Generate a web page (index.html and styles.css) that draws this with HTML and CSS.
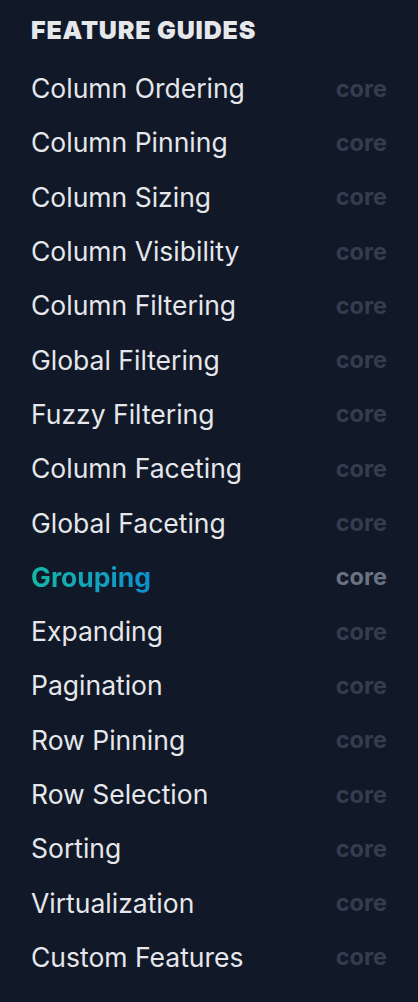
FILE: index.html
```html
<!DOCTYPE html>
<html>
<head>
<meta charset="utf-8">
<link rel="stylesheet" href="styles.css">
</head>
<body>
<nav class="sidebar">
  <h2 class="heading">Feature Guides</h2>
  <ul class="list">
    <li class="item"><span class="label">Column Ordering</span><span class="tag">core</span></li>
    <li class="item"><span class="label">Column Pinning</span><span class="tag">core</span></li>
    <li class="item"><span class="label">Column Sizing</span><span class="tag">core</span></li>
    <li class="item"><span class="label">Column Visibility</span><span class="tag">core</span></li>
    <li class="item"><span class="label">Column Filtering</span><span class="tag">core</span></li>
    <li class="item"><span class="label">Global Filtering</span><span class="tag">core</span></li>
    <li class="item"><span class="label">Fuzzy Filtering</span><span class="tag">core</span></li>
    <li class="item"><span class="label">Column Faceting</span><span class="tag">core</span></li>
    <li class="item"><span class="label">Global Faceting</span><span class="tag">core</span></li>
    <li class="item active"><span class="label">Grouping</span><span class="tag">core</span></li>
    <li class="item"><span class="label">Expanding</span><span class="tag">core</span></li>
    <li class="item"><span class="label">Pagination</span><span class="tag">core</span></li>
    <li class="item"><span class="label">Row Pinning</span><span class="tag">core</span></li>
    <li class="item"><span class="label">Row Selection</span><span class="tag">core</span></li>
    <li class="item"><span class="label">Sorting</span><span class="tag">core</span></li>
    <li class="item"><span class="label">Virtualization</span><span class="tag">core</span></li>
    <li class="item"><span class="label">Custom Features</span><span class="tag">core</span></li>
  </ul>
</nav>
</body>
</html>
```
FILE: styles.css
```css
html, body {
  margin: 0;
  padding: 0;
  background: #111827;
}
body {
  font-family: Inter, "Noto Sans", sans-serif;
  color: #e5e7eb;
}
.sidebar {
  padding: 10px 31px 0 31px;
}
.heading {
  margin: 0;
  font-size: 25px;
  font-weight: 900;
  text-transform: uppercase;
  line-height: 40px;
  color: #e5e7eb;
  letter-spacing: 0.8px;
}
.list {
  list-style: none;
  margin: 0;
  padding: 11px 0 0 0;
}
.item {
  display: flex;
  justify-content: space-between;
  align-items: center;
  height: 54.3px;
}
.label {
  font-size: 26.5px;
  font-weight: 400;
}
.tag {
  font-size: 23.5px;
  font-weight: 700;
  color: #343d4d;
}
.active .label {
  font-weight: 700;
  background: linear-gradient(90deg, #14b8a6, #0e8fcf);
  -webkit-background-clip: text;
  background-clip: text;
  color: transparent;
}
.active .tag {
  color: #6b7280;
}
```
